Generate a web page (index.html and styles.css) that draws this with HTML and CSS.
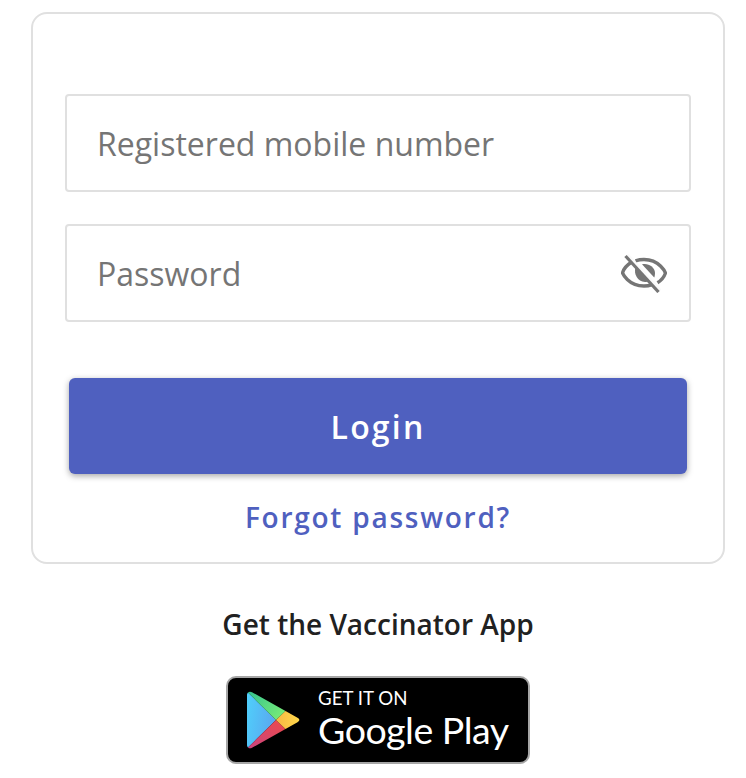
FILE: index.html
```html
<!DOCTYPE html>
<html lang="en">
<head>
  <meta charset="UTF-8" />
  <meta name="viewport" content="width=device-width, initial-scale=1.0"/>
  <title>Login</title>

  <link rel="stylesheet" href="styles.css">
</head>
<body>

  <div class="card">
    <form class="login-form">
      <div class="field">
        <input type="text" placeholder="Registered mobile number" />
      </div>
      <div class="field">
        <input type="password" placeholder="Password" />
        <svg class="eye-icon" viewBox="0 0 46 40" width="46" height="40" aria-hidden="true">
          <path d="M10 9.5 C3 14 1.5 20 1.5 20 C1.5 20 7 33 23 33 C26 33 28.600 32.500 31 31.600" fill="none" stroke="#757575" stroke-width="3.400"/>
          <path d="M14.500 7.800 C17 7 19.800 6.500 23 6.500 C39 6.500 44.500 20 44.500 20 C44.500 20 42.500 26 36.500 29.800" fill="none" stroke="#757575" stroke-width="3.400"/>
          <path d="M14.500 14.500 C12.500 21 16.500 28.500 24 29 C25.500 29 26.500 28.800 27 28.500 Z" fill="#757575"/>
          <path d="M21 11.300 C27 9.700 34 14 34 20 C34 21.800 33.700 23.500 33.200 24.500 Z" fill="#757575"/>
          <path d="M6.500 1.500 L39.500 37.500" fill="none" stroke="#fafafa" stroke-width="2.500"/>
          <path d="M4.500 3 L37.500 39" fill="none" stroke="#757575" stroke-width="3.200"/>
        </svg>
      </div>
      <button type="button" class="login-btn">Login</button>
      <a href="#" class="forgot-link">Forgot password?</a>
    </form>
  </div>

  <div class="app-section">
    <p class="app-title">Get the Vaccinator App</p>
    <a href="#" class="play-badge">
      <svg class="play-icon" viewBox="0 0 54 58" width="54" height="58" aria-hidden="true">
        <defs>
          <linearGradient id="playBlue" x1="0" y1="0" x2="1" y2="0.300">
            <stop offset="0" stop-color="#4fd0fb"/>
            <stop offset="1" stop-color="#5aa8f0"/>
          </linearGradient>
          <linearGradient id="playGreen" x1="0" y1="0" x2="1" y2="0.600">
            <stop offset="0" stop-color="#35c48f"/>
            <stop offset="1" stop-color="#74e978"/>
          </linearGradient>
          <linearGradient id="playRed" x1="1" y1="0" x2="0" y2="1">
            <stop offset="0" stop-color="#ee4a4a"/>
            <stop offset="1" stop-color="#c9447f"/>
          </linearGradient>
          <linearGradient id="playYellow" x1="0" y1="0" x2="1" y2="0">
            <stop offset="0" stop-color="#f9b844"/>
            <stop offset="1" stop-color="#ffd84a"/>
          </linearGradient>
        </defs>
        <path d="M1 1.500 C0.500 2 0 3 0 4 V54 C0 55 0.500 56 1 56.500 L29 29 Z" fill="url(#playBlue)"/>
        <path d="M1 1.500 C2 0.500 3.500 0.300 5 1.200 L38.500 20 L29 29 Z" fill="url(#playGreen)"/>
        <path d="M1 56.500 C2 57.500 3.500 57.700 5 56.800 L38.500 38 L29 29 Z" fill="url(#playRed)"/>
        <path d="M38.500 20 L50.500 26.800 C53 28.200 53 29.800 50.500 31.200 L38.500 38 L29 29 Z" fill="url(#playYellow)"/>
      </svg>
      <span class="play-text">
        <span class="play-small">GET IT ON</span>
        <span class="play-big">Google Play</span>
      </span>
    </a>
  </div>

</body>
</html>
```

FILE: styles.css
```css
body {
  margin: 0;
  padding: 12px 21px 0 31px;
  background-color: #ffffff;
  color: #212121;
  font-family: 'Open Sans', sans-serif;
}

.card {
  box-sizing: border-box;
  width: 694px;
  height: 552px;
  padding: 80px 32px 0;
  border: 2px solid #e0e0e0;
  border-radius: 16px;
  background-color: #fff;
}

.login-form {
  display: flex;
  flex-direction: column;
}

.field {
  display: flex;
  align-items: center;
  box-sizing: border-box;
  height: 98px;
  margin-bottom: 32px;
  padding: 0 22px 0 30px;
  border: 2px solid #e0e0e0;
  border-radius: 4px;
}

.field input {
  flex: 1;
  min-width: 0;
  padding: 0;
  border: none;
  outline: none;
  font-family: inherit;
  font-size: 32px;
  color: #212121;
  background: transparent;
}

.field input::placeholder {
  color: #757575;
  opacity: 1;
}

.eye-icon {
  flex-shrink: 0;
}

.login-btn {
  height: 96px;
  margin: 24px 4px 0;
  border: none;
  border-radius: 6px;
  background-color: #4f60bf;
  color: #fff;
  font-family: inherit;
  font-size: 32px;
  font-weight: 600;
  letter-spacing: 2.200px;
  box-shadow: 0 2px 6px rgba(0, 0, 0, 0.35);
}

.forgot-link {
  margin-top: 23px;
  text-align: center;
  text-decoration: none;
  color: #4f60bf;
  font-size: 28px;
  font-weight: 600;
  letter-spacing: 1.750px;
  line-height: 40px;
}

.app-section {
  display: flex;
  flex-direction: column;
  align-items: center;
  width: 694px;
}

.app-title {
  margin: 40px 0 32px;
  font-size: 28px;
  font-weight: 600;
  line-height: 40px;
}

.play-badge {
  display: flex;
  align-items: center;
  box-sizing: border-box;
  width: 304px;
  height: 88px;
  padding: 0 0 0 19px;
  border: 2px solid #a6a6a6;
  border-radius: 10px;
  background-color: #000;
  color: #fff;
  text-decoration: none;
}

.play-icon {
  flex-shrink: 0;
}

.play-text {
  display: flex;
  flex-direction: column;
  margin: 0 0 3px 17px;
  font-family: 'Lato', sans-serif;
}

.play-small {
  font-size: 18.700px;
  line-height: 22px;
}

.play-big {
  font-size: 37.500px;
  line-height: 42px;
  letter-spacing: -0.5px;
}
```
